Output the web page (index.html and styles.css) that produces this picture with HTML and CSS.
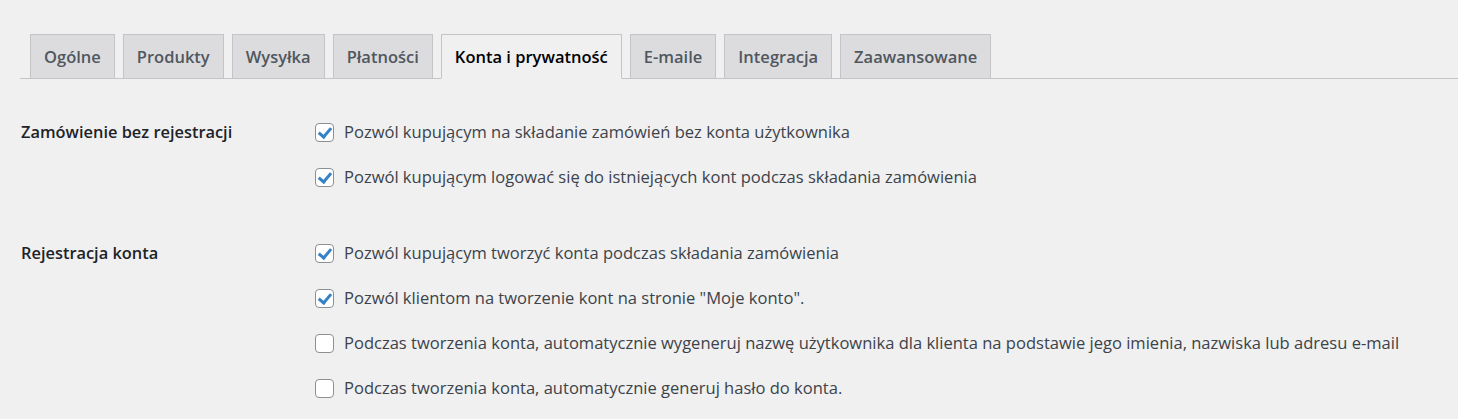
FILE: index.html
```html
<!DOCTYPE html>
<html lang="pl">
<head>
<meta charset="utf-8">
<title>Ustawienia</title>
<link rel="stylesheet" href="styles.css">
</head>
<body>
<div class="wrap">
  <nav class="tabs">
    <a class="tab">Ogólne</a>
    <a class="tab">Produkty</a>
    <a class="tab">Wysyłka</a>
    <a class="tab">Płatności</a>
    <a class="tab active">Konta i prywatność</a>
    <a class="tab">E-maile</a>
    <a class="tab">Integracja</a>
    <a class="tab">Zaawansowane</a>
  </nav>
  <div class="settings">
    <div class="group">
      <div class="label">Zamówienie bez rejestracji</div>
      <div class="options">
        <label class="opt"><span class="cb checked"></span>Pozwól kupującym na składanie zamówień bez konta użytkownika</label>
        <label class="opt"><span class="cb checked"></span>Pozwól kupującym logować się do istniejących kont podczas składania zamówienia</label>
      </div>
    </div>
    <div class="group">
      <div class="label">Rejestracja konta</div>
      <div class="options">
        <label class="opt"><span class="cb checked"></span>Pozwól kupującym tworzyć konta podczas składania zamówienia</label>
        <label class="opt"><span class="cb checked"></span>Pozwól klientom na tworzenie kont na stronie "Moje konto".</label>
        <label class="opt"><span class="cb"></span>Podczas tworzenia konta, automatycznie wygeneruj nazwę użytkownika dla klienta na podstawie jego imienia, nazwiska lub adresu e-mail</label>
        <label class="opt"><span class="cb"></span>Podczas tworzenia konta, automatycznie generuj hasło do konta.</label>
      </div>
    </div>
  </div>
</div>
</body>
</html>
```
FILE: styles.css
```css
html, body {
  margin: 0;
  padding: 0;
  background: #f0f0f1;
  font-family: "Open Sans", "Noto Sans", sans-serif;
  color: #3c434a;
}
.wrap {
  padding: 34px 0 0 20px;
}
.tabs {
  display: flex;
  gap: 8px;
  padding-left: 10px;
  border-bottom: 1px solid #c3c4c7;
  height: 44px;
  align-items: flex-end;
}
.tab {
  display: block;
  box-sizing: border-box;
  height: 45px;
  margin-bottom: -1px;
  padding: 0 13px;
  line-height: 43px;
  font-size: 16.5px;
  font-weight: 600;
  color: #50575e;
  background: #dcdcde;
  border: 1px solid #c3c4c7;
  white-space: nowrap;
}
.tab.active {
  background: #f0f0f1;
  color: #000;
  border-bottom-color: #f0f0f1;
}
.settings {
  padding-top: 41px;
}
.group {
  display: flex;
}
.group + .group {
  margin-top: 52px;
}
.label {
  width: 294px;
  flex: none;
  padding-left: 1px;
  font-size: 16.4px;
  font-weight: 600;
  color: #1d2327;
  line-height: 24px;
}
.options {
  display: flex;
  flex-direction: column;
  gap: 21px;
}
.opt {
  display: flex;
  align-items: center;
  line-height: 24px;
  font-size: 16.55px;
  white-space: nowrap;
}
.cb {
  flex: none;
  width: 19px;
  height: 19px;
  box-sizing: border-box;
  border: 1px solid #8c8f94;
  border-radius: 4px;
  background: #fff;
  margin-right: 10px;
  position: relative;
}
.cb.checked::after {
  content: "";
  position: absolute;
  left: 5px;
  top: 1px;
  width: 5px;
  height: 10px;
  border: solid #3582c4;
  border-width: 0 3px 3px 0;
  transform: rotate(40deg);
}
```
